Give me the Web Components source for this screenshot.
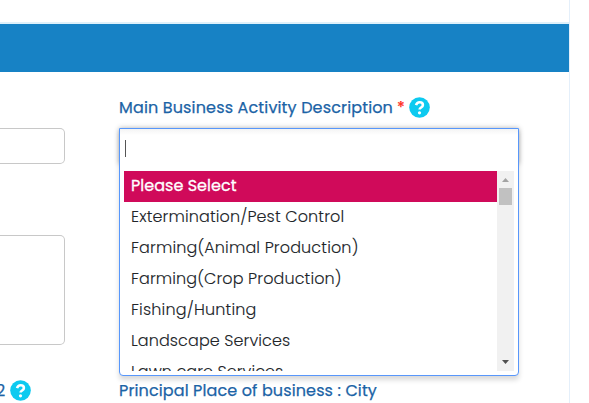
<!DOCTYPE html>
<html lang="en"><head><meta charset="utf-8"><title>Business details</title>
<style>
html,body{margin:0;background:#fff;overflow:hidden}
body{width:589px;height:403px;font:400 16px/24px Poppins,Inter,"Open Sans",sans-serif;font-feature-settings:"cv11","ss03"}
</style></head><body>
<form-page></form-page>
<script>
const define=(name,html,setup)=>customElements.define(name,class extends HTMLElement{
  connectedCallback(){
    if(this.shadowRoot)return;
    const t=document.createElement('template');t.innerHTML=html;
    this.attachShadow({mode:'open'}).append(t.content.cloneNode(true));
    if(setup)setup(this,this.shadowRoot);
  }
});
/* Text spaced evenly to fill the width given in its "w" attribute. */
define('fit-text',`<style>:host{display:block;white-space:pre;flex:none}span{display:inline-block}</style><span><slot></slot></span>`,(el,root)=>{
  const w=+el.getAttribute('w'),s=root.querySelector('span');
  const n=el.textContent.length;
  s.style.letterSpacing=((w-s.getBoundingClientRect().width)/n)+'px';
  el.style.width=w+'px';
});
define('help-icon',`<style>:host{display:block;width:21px;height:21px;flex:none}svg{display:block}</style>
<svg width="21" height="21" viewBox="0 0 21 21"><circle cx="10.5" cy="10.5" r="10.3" fill="#0dcaf0"/><path d="M7 8.2C7.6 6.3 8.8 5.3 10.6 5.3c2 0 3.3 1.1 3.3 2.7 0 2.5-3.3 2.5-3.3 4.6" fill="none" stroke="#fff" stroke-width="2.6"/><circle cx="10.5" cy="15.8" r="1.6" fill="#fff"/></svg>`);
define('field-label',`<style>:host{display:flex;align-items:center;height:24px;color:#1b63a6;font-weight:400;-webkit-text-stroke:.25px currentColor}i{font-style:normal;color:#ff2a1a;margin-left:4px;width:8px;flex:none}help-icon{margin:-2px 0 0 4px}</style><slot></slot>`,(el,root)=>{
  if(el.hasAttribute('required'))root.append(Object.assign(document.createElement('i'),{textContent:'*'}));
  if(el.hasAttribute('help'))root.append(document.createElement('help-icon'));
});
define('field-box',`<style>:host{display:block;box-sizing:border-box;width:100%;border:1px solid #c8c8c8;border-left:0;border-radius:0 5px 5px 0;background:#fff}</style>`);
define('select-option',`<style>:host{display:flex;align-items:center;box-sizing:border-box;height:31px;padding:0 7px 2px;color:#212529;font-weight:300;-webkit-text-stroke:.1px currentColor}:host([selected]){background:#d00a5a;color:#fff;font-weight:400;-webkit-text-stroke:.3px currentColor}</style><slot></slot>`);
define('scroll-bar',`<style>:host{display:flex;flex-direction:column;align-items:center;width:17px;background:#f1f1f1}svg{display:block;flex:none}b{width:13px;height:17px;background:#c1c1c1;flex:none}u{flex:1}</style>
<svg width="17" height="17"><path d="M5 11h7L8.5 7z" fill="#a3a3a3"/></svg><b></b><u></u><svg width="17" height="17"><path d="M5 6h7L8.5 10z" fill="#505050"/></svg>`);
define('select-panel',`<style>
:host{display:block;box-sizing:border-box;width:400px;height:248px;border:1px solid #5897fb;border-radius:0 0 4px 4px;background:#fff;padding:0 4px 4px;box-shadow:0 4px 5px rgba(0,0,0,.15)}
.search{height:42px;box-sizing:border-box;padding:11px 1px;margin:0 -4px;background:linear-gradient(#f4f4f4,#fff 6px)}
.search::before{content:"";display:block;width:1px;height:17px;background:#555;margin-left:4px}
.list{display:flex;height:200px}.items{flex:1;overflow:hidden}
</style><div class="search"></div><div class="list"><div class="items"><slot></slot></div><scroll-bar></scroll-bar></div>`);
define('select-box',`<style>:host{display:block;width:400px;height:36px;box-shadow:0 0 5px rgba(0,0,0,.3)}</style><slot></slot>`);
define('form-page',`<style>
:host{display:block;box-sizing:border-box;width:570px;height:403px;border-right:1px solid #e4effa;overflow:hidden}
header{height:22px}.bar{height:48px;background:#1782c5;border-top:2px solid #def0fa}
main{display:grid;grid-template-columns:65px 400px;column-gap:54px;padding-top:24px}
.col{display:flex;flex-direction:column}
.left{padding-top:32px}.gap{height:71px;flex:none}
.input{height:36px}.area{height:110px}.left field-label{margin:34px 0 0 -4px}
.right>field-label:last-child{margin-top:215px}
.right select-box{margin-top:8px}
</style>
<header></header><div class="bar"></div>
<main><div class="col left"><field-box class="input"></field-box><div class="gap"></div><field-box class="area"></field-box><field-label help><fit-text w="10">2</fit-text></field-label></div>
<div class="col right"><field-label required help><fit-text w="274">Main Business Activity Description</fit-text></field-label>
<select-box><select-panel>
<select-option selected><fit-text w="105.5">Please Select</fit-text></select-option>
<select-option><fit-text w="213.3">Extermination/Pest Control</fit-text></select-option>
<select-option><fit-text w="227.5">Farming(Animal Production)</fit-text></select-option>
<select-option><fit-text w="210.6">Farming(Crop Production)</fit-text></select-option>
<select-option><fit-text w="125.6">Fishing/Hunting</fit-text></select-option>
<select-option><fit-text w="159.3">Landscape Services</fit-text></select-option>
<select-option><fit-text w="152.3">Lawn care Services</fit-text></select-option>
</select-panel></select-box>
<field-label><fit-text w="258">Principal Place of business : City</fit-text></field-label></div></main>`);
</script></body></html>
